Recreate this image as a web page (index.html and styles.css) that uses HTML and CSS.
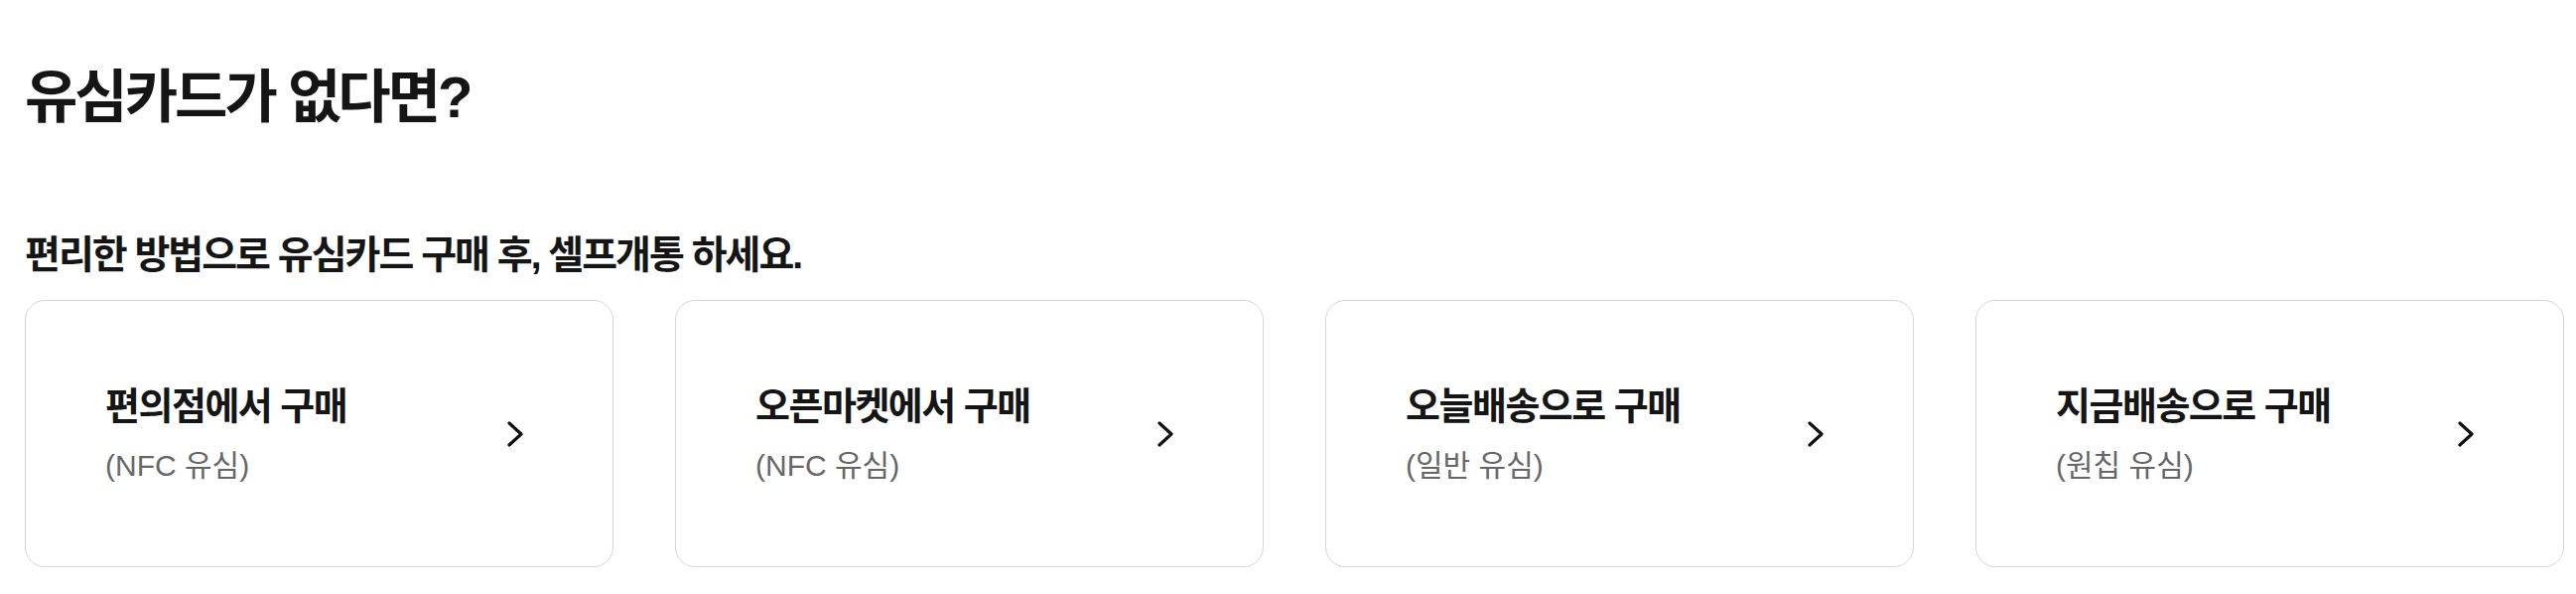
FILE: index.html
```html
<!DOCTYPE html>
<html lang="ko">
<head>
<meta charset="utf-8">
<link rel="stylesheet" href="styles.css">
</head>
<body>
<main class="page">
  <h1 class="title">유심카드가 없다면?</h1>
  <h2 class="subtitle">편리한 방법으로 유심카드 구매 후, 셀프개통 하세요.</h2>
  <div class="cards">
    <a class="card" href="#">
      <div class="card-text">
        <div class="card-title">편의점에서 구매</div>
        <div class="card-sub">(NFC 유심)</div>
      </div>
      <svg class="chev" viewBox="0 0 16 26" width="16" height="26"><polyline points="2,2 14,13 2,24" fill="none" stroke="#111" stroke-width="3.2" stroke-linecap="round" stroke-linejoin="round"/></svg>
    </a>
    <a class="card" href="#">
      <div class="card-text">
        <div class="card-title">오픈마켓에서 구매</div>
        <div class="card-sub">(NFC 유심)</div>
      </div>
      <svg class="chev" viewBox="0 0 16 26" width="16" height="26"><polyline points="2,2 14,13 2,24" fill="none" stroke="#111" stroke-width="3.2" stroke-linecap="round" stroke-linejoin="round"/></svg>
    </a>
    <a class="card" href="#">
      <div class="card-text">
        <div class="card-title">오늘배송으로 구매</div>
        <div class="card-sub">(일반 유심)</div>
      </div>
      <svg class="chev" viewBox="0 0 16 26" width="16" height="26"><polyline points="2,2 14,13 2,24" fill="none" stroke="#111" stroke-width="3.2" stroke-linecap="round" stroke-linejoin="round"/></svg>
    </a>
    <a class="card" href="#">
      <div class="card-text">
        <div class="card-title">지금배송으로 구매</div>
        <div class="card-sub">(원칩 유심)</div>
      </div>
      <svg class="chev" viewBox="0 0 16 26" width="16" height="26"><polyline points="2,2 14,13 2,24" fill="none" stroke="#111" stroke-width="3.2" stroke-linecap="round" stroke-linejoin="round"/></svg>
    </a>
  </div>
</main>
</body>
</html>
```
FILE: styles.css
```css
* { box-sizing: border-box; }
html, body { margin: 0; padding: 0; background: #fff; }
body {
  font-family: "Liberation Sans", "Noto Sans CJK KR", sans-serif;
  color: #111;
}
.page {
  padding: 63px 0 0 25px;
}
.title {
  margin: 0;
  font-size: 58px;
  line-height: 70px;
  font-weight: 700;
  letter-spacing: -3px;
  color: #151515;
}
.subtitle {
  margin: 99px 0 0 0;
  font-size: 39px;
  line-height: 50px;
  font-weight: 700;
  letter-spacing: -2px;
  color: #151515;
}
.cards {
  margin-top: 20px;
  display: grid;
  grid-template-columns: repeat(4, 593px);
  gap: 62px;
}
.card {
  height: 269px;
  border: 1.5px solid #d6d6d6;
  border-radius: 20px;
  display: flex;
  align-items: center;
  justify-content: space-between;
  padding: 0 90px 0 80px;
  text-decoration: none;
  color: inherit;
}
.card-text {
  display: flex;
  flex-direction: column;
  gap: 18px;
}
.card-title {
  font-size: 38px;
  line-height: 46px;
  font-weight: 700;
  letter-spacing: -1.5px;
  color: #151515;
}
.card-sub {
  font-size: 30px;
  line-height: 38px;
  letter-spacing: 0;
  color: #666;
}
.chev {
  display: block;
}
```
